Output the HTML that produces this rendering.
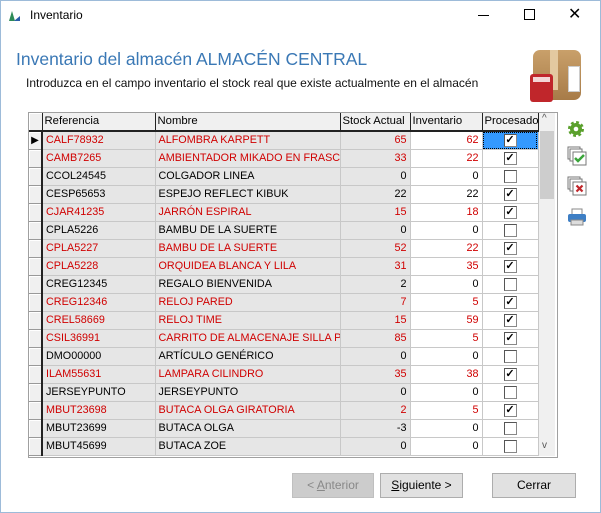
<!DOCTYPE html>
<html><head><meta charset="utf-8"><style>
body{margin:0;width:601px;height:513px;background:#fff;font-family:"Liberation Sans",sans-serif;position:relative;overflow:hidden}
.win{position:absolute;left:0;top:0;width:599px;height:511px;border:1px solid #9dbbd9}
.abs{position:absolute}
table{border-collapse:collapse;table-layout:fixed;width:509px;font-size:10.8px;position:absolute;left:29px;top:113px}
td{height:17px;padding:0 3px;border:1px solid #c8c8c8;white-space:nowrap;overflow:hidden;line-height:17px;background:#e6e6e6}
td.ind{background:#f0f0f0;border:none;border-right:2px solid #222;border-bottom:1px solid #999;padding:0;box-shadow:inset 1px 1px #fff}
td.n{text-align:right}
td.w{background:#fff}
td.c{background:#fff;text-align:center;padding:0}
tr.r td{color:#d00000}
tr.h td{background:#f0f0f0;border:none;border-right:1px solid #222;border-bottom:2px solid #222;color:#000;padding:0 2px;font-size:11.3px}
.cb{display:inline-block;width:11px;height:11px;border:1px solid #888;border-top-color:#555;border-left-color:#555;background:#fff;vertical-align:middle;font-size:11px;line-height:11px;text-align:center;color:#000;font-weight:bold}
.btn{position:absolute;height:23px;border:1px solid #adadad;background:#e1e1e1;font-size:12px;text-align:center;line-height:23px}
</style></head><body>
<div class="win"></div>
<svg class="abs" style="left:8px;top:8px" width="16" height="14"><path d="M1 13 L4 3 L7 13Z" fill="#2e8b57"/><path d="M6 13 L12 8 L12 13Z" fill="#2a5da8"/></svg>
<div class="abs" style="left:30px;top:8px;font-size:12px">Inventario</div>
<div class="abs" style="left:478px;top:15px;width:11px;height:1px;background:#000"></div>
<div class="abs" style="left:524px;top:9px;width:9px;height:9px;border:1px solid #000"></div>
<div class="abs" style="left:568px;top:4px;font-size:16px">✕</div>
<div class="abs" style="left:16px;top:49px;font-size:17.5px;color:#3a78b5">Inventario del almacén ALMACÉN CENTRAL</div>
<div class="abs" style="left:26px;top:76px;font-size:12px;color:#111">Introduzca en el campo inventario el stock real que existe actualmente en el almacén</div>
<div class="abs" style="left:533px;top:50px;width:48px;height:50px;border-radius:7px;background:linear-gradient(#c9a06a,#a77b48)"></div>
<div class="abs" style="left:550px;top:50px;width:8px;height:40px;background:#e3c9a0"></div>
<div class="abs" style="left:568px;top:66px;width:10px;height:24px;background:#fff;border:1px solid #ccc"></div>
<div class="abs" style="left:530px;top:74px;width:23px;height:28px;border-radius:3px;background:#c0262b"></div>
<div class="abs" style="left:533px;top:77px;width:17px;height:5px;background:#f3d6d6"></div>
<div class="abs" style="left:28px;top:112px;width:528px;height:344px;border:1px solid #a0a0a0;background:#fff"></div>
<div class="abs" style="left:538px;top:113px;width:17px;height:343px;background:#f0f0f0"></div>
<div class="abs" style="left:540px;top:131px;width:14px;height:68px;background:#cdcdcd"></div>
<div class="abs" style="left:542px;top:113px;font-size:10px;color:#555">^</div>
<div class="abs" style="left:542px;top:440px;font-size:10px;color:#555">v</div>
<table>
<colgroup><col style="width:13px"><col style="width:113px"><col style="width:185px"><col style="width:70px"><col style="width:72px"><col style="width:56px"></colgroup>
<tr class="h"><td class="ind"></td><td>Referencia</td><td>Nombre</td><td>Stock Actual</td><td>Inventario</td><td>Procesado</td></tr>
<tr class="r"><td class="ind" style="font-size:10px;color:#000;text-align:center">▶</td><td>CALF78932</td><td>ALFOMBRA KARPETT</td><td class="n">65</td><td class="n w">62</td><td class="c" style="background:#3399ff;outline:1px dotted #000;outline-offset:-2px"><span class="cb">✓</span></td></tr>
<tr class="r"><td class="ind"></td><td>CAMB7265</td><td>AMBIENTADOR MIKADO EN FRASCO</td><td class="n">33</td><td class="n w">22</td><td class="c"><span class="cb">✓</span></td></tr>
<tr><td class="ind"></td><td>CCOL24545</td><td>COLGADOR LINEA</td><td class="n">0</td><td class="n w">0</td><td class="c"><span class="cb"></span></td></tr>
<tr><td class="ind"></td><td>CESP65653</td><td>ESPEJO REFLECT KIBUK</td><td class="n">22</td><td class="n w">22</td><td class="c"><span class="cb">✓</span></td></tr>
<tr class="r"><td class="ind"></td><td>CJAR41235</td><td>JARRÓN ESPIRAL</td><td class="n">15</td><td class="n w">18</td><td class="c"><span class="cb">✓</span></td></tr>
<tr><td class="ind"></td><td>CPLA5226</td><td>BAMBU DE LA SUERTE</td><td class="n">0</td><td class="n w">0</td><td class="c"><span class="cb"></span></td></tr>
<tr class="r"><td class="ind"></td><td>CPLA5227</td><td>BAMBU DE LA SUERTE</td><td class="n">52</td><td class="n w">22</td><td class="c"><span class="cb">✓</span></td></tr>
<tr class="r"><td class="ind"></td><td>CPLA5228</td><td>ORQUIDEA BLANCA Y LILA</td><td class="n">31</td><td class="n w">35</td><td class="c"><span class="cb">✓</span></td></tr>
<tr><td class="ind"></td><td>CREG12345</td><td>REGALO BIENVENIDA</td><td class="n">2</td><td class="n w">0</td><td class="c"><span class="cb"></span></td></tr>
<tr class="r"><td class="ind"></td><td>CREG12346</td><td>RELOJ PARED</td><td class="n">7</td><td class="n w">5</td><td class="c"><span class="cb">✓</span></td></tr>
<tr class="r"><td class="ind"></td><td>CREL58669</td><td>RELOJ TIME</td><td class="n">15</td><td class="n w">59</td><td class="c"><span class="cb">✓</span></td></tr>
<tr class="r"><td class="ind"></td><td>CSIL36991</td><td>CARRITO DE ALMACENAJE SILLA PLEGABLE</td><td class="n">85</td><td class="n w">5</td><td class="c"><span class="cb">✓</span></td></tr>
<tr><td class="ind"></td><td>DMO00000</td><td>ARTÍCULO GENÉRICO</td><td class="n">0</td><td class="n w">0</td><td class="c"><span class="cb"></span></td></tr>
<tr class="r"><td class="ind"></td><td>ILAM55631</td><td>LAMPARA CILINDRO</td><td class="n">35</td><td class="n w">38</td><td class="c"><span class="cb">✓</span></td></tr>
<tr><td class="ind"></td><td>JERSEYPUNTO</td><td>JERSEYPUNTO</td><td class="n">0</td><td class="n w">0</td><td class="c"><span class="cb"></span></td></tr>
<tr class="r"><td class="ind"></td><td>MBUT23698</td><td>BUTACA OLGA GIRATORIA</td><td class="n">2</td><td class="n w">5</td><td class="c"><span class="cb">✓</span></td></tr>
<tr><td class="ind"></td><td>MBUT23699</td><td>BUTACA OLGA</td><td class="n">-3</td><td class="n w">0</td><td class="c"><span class="cb"></span></td></tr>
<tr><td class="ind"></td><td>MBUT45699</td><td>BUTACA ZOE</td><td class="n">0</td><td class="n w">0</td><td class="c"><span class="cb"></span></td></tr>
</table>
<svg class="abs" style="left:567px;top:120px" width="18" height="18"><circle cx="9" cy="9" r="6" fill="#5aa02c" stroke="#5aa02c" stroke-width="4" stroke-dasharray="2.5 2.2"/><circle cx="9" cy="9" r="2.3" fill="#fff"/></svg>
<svg class="abs" style="left:567px;top:146px" width="20" height="20"><rect x="1" y="1" width="12" height="12" fill="#fff" stroke="#777"/><rect x="3" y="3" width="12" height="12" fill="#fff" stroke="#777"/><rect x="6" y="6" width="13" height="13" fill="#fff" stroke="#777"/><path d="M8 12 l3 3 l6 -6" stroke="#3aa53a" stroke-width="2.5" fill="none"/></svg>
<svg class="abs" style="left:567px;top:176px" width="20" height="20"><rect x="1" y="1" width="12" height="12" fill="#fff" stroke="#777"/><rect x="3" y="3" width="12" height="12" fill="#fff" stroke="#777"/><rect x="6" y="6" width="13" height="13" fill="#fff" stroke="#777"/><path d="M9.5 9.5 l6 6 M15.5 9.5 l-6 6" stroke="#c0262b" stroke-width="2.2"/></svg>
<svg class="abs" style="left:567px;top:208px" width="20" height="18"><rect x="5" y="1" width="10" height="6" fill="#fff" stroke="#888"/><rect x="1" y="6" width="18" height="8" rx="2" fill="#3d7ec4"/><rect x="4" y="12" width="12" height="5" fill="#ddd" stroke="#888"/></svg>
<div class="btn" style="left:292px;top:473px;width:80px;color:#888;background:#cccccc;border-color:#bfbfbf">&lt; <u>A</u>nterior</div>
<div class="btn" style="left:380px;top:473px;width:81px"><u>S</u>iguiente &gt;</div>
<div class="btn" style="left:492px;top:473px;width:82px">Cerrar</div>
</body></html>
